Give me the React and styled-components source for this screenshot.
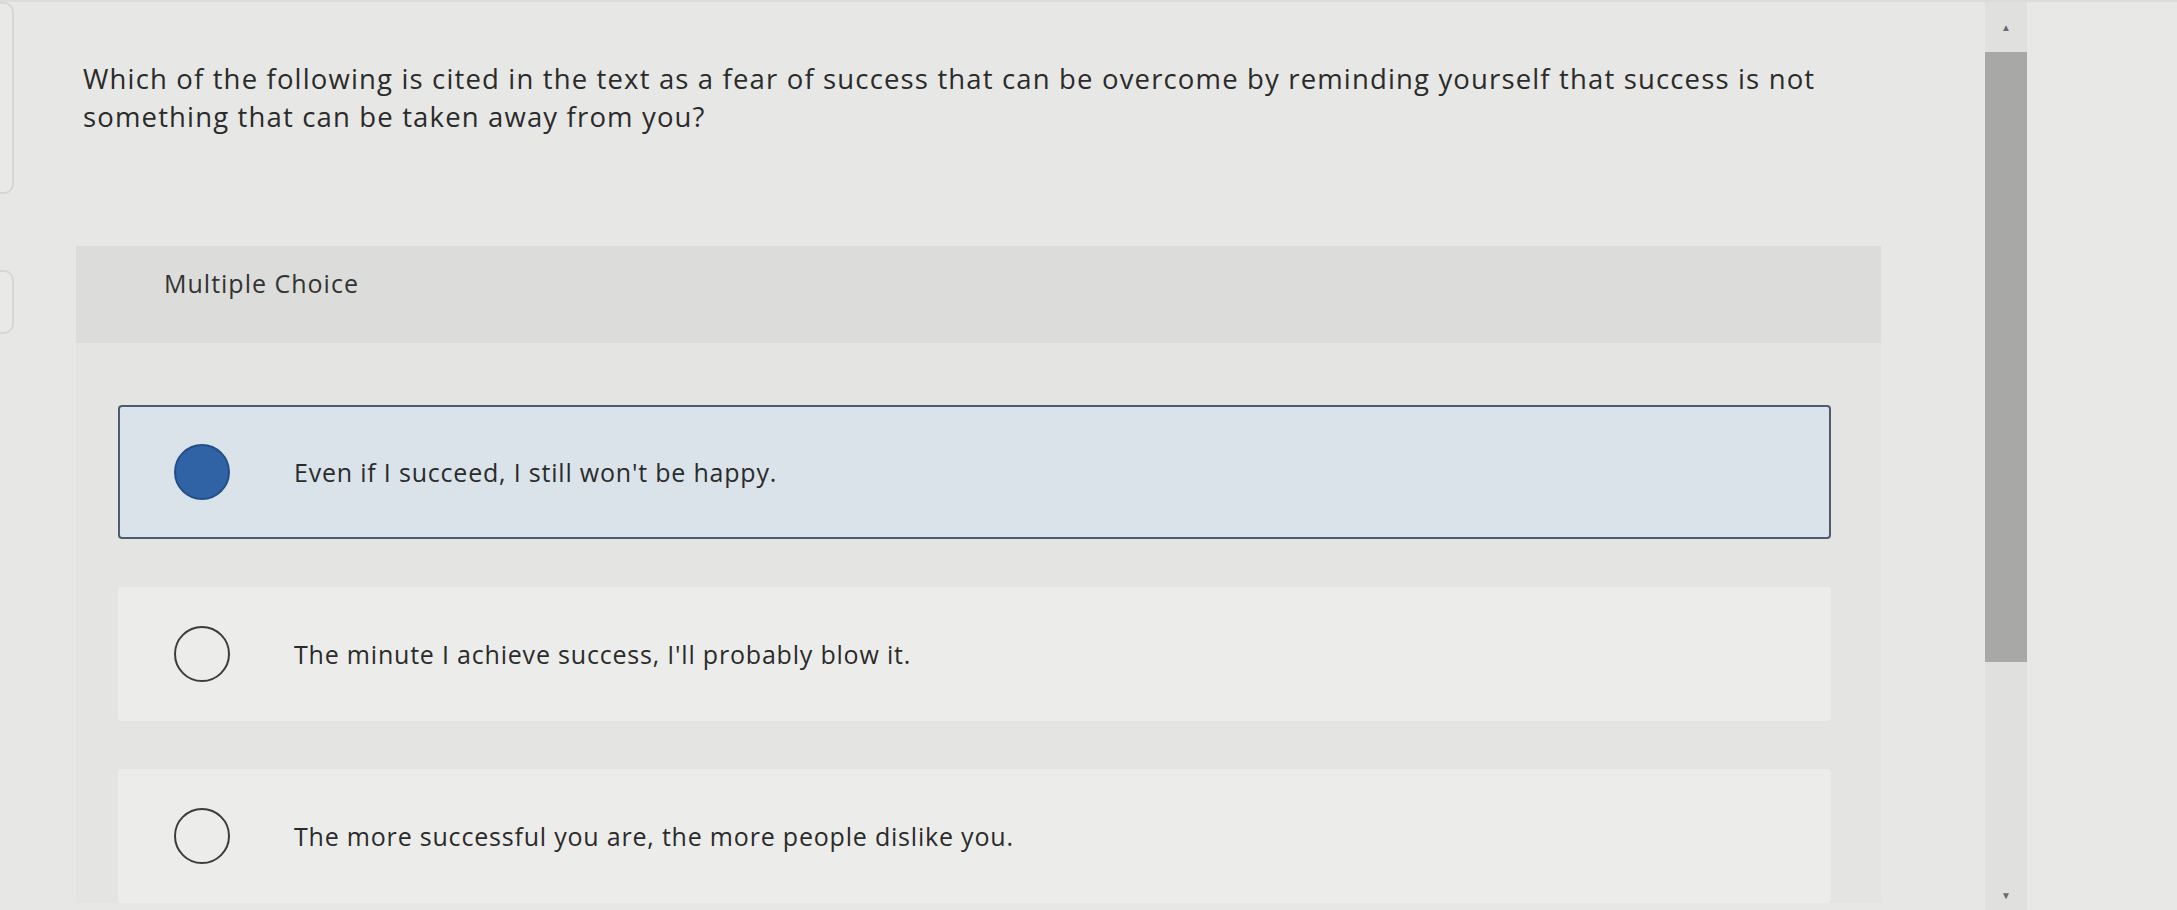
import React from "react";
import styled, { createGlobalStyle } from "styled-components";

const GlobalStyle = createGlobalStyle`
  html, body {
    margin: 0;
    padding: 0;
    background: #e7e7e5;
    font-family: "Open Sans", Lato, sans-serif;
    color: #2b2b2b;
  }
`;

const Page = styled.div`
  display: flex;
  width: 2177px;
  height: 910px;
  overflow: hidden;
  background: #e7e7e5;
  border-top: 2px solid #dcdcda;
  box-sizing: border-box;
`;

const LeftRail = styled.div`
  width: 14px;
  flex-shrink: 0;
  display: flex;
  flex-direction: column;
  gap: 76px;
`;

const RailTab = styled.div`
  height: ${(p) => p.h}px;
  border: 2px solid #d6d6d4;
  border-left: none;
  border-radius: 0 10px 10px 0;
  background: #e9e9e7;
`;

const Main = styled.div`
  flex: 1;
  padding: 58px 104px 0 62px;
  display: flex;
  flex-direction: column;
`;

const Question = styled.p`
  margin: 0 0 0 7px;
  font-size: 27.5px;
  letter-spacing: 1.15px;
  line-height: 38px;
  color: #2b2b2b;
`;

const Panel = styled.section`
  margin-top: 110px;
  background: #e4e4e2;
  display: flex;
  flex-direction: column;
`;

const PanelHeader = styled.div`
  height: 97px;
  background: #dcdcda;
  padding: 20px 88px 0;
  box-sizing: border-box;
  font-size: 25px;
  letter-spacing: 1px;
  line-height: 34px;
  color: #333;
`;

const Options = styled.div`
  display: flex;
  flex-direction: column;
  gap: 48px;
  padding: 62px 50px 0 42px;
`;

const Option = styled.label`
  display: flex;
  align-items: center;
  height: 134px;
  box-sizing: border-box;
  padding-left: 54px;
  border-radius: 4px;
  border: 2px solid ${(p) => (p.selected ? "#4d5c70" : "transparent")};
  background: ${(p) => (p.selected ? "#d9e3e9" : "#ececea")};
`;

const Radio = styled.span`
  width: 56px;
  height: 56px;
  flex-shrink: 0;
  border-radius: 50%;
  box-sizing: border-box;
  border: 2px solid ${(p) => (p.checked ? "#244f86" : "#3c3c3c")};
  background: ${(p) => (p.checked ? "#2f63a6" : "transparent")};
`;

const OptionText = styled.span`
  margin-left: 64px;
  font-size: 25px;
  letter-spacing: 0.8px;
  color: #2b2b2b;
`;

const ScrollTrack = styled.div`
  width: 42px;
  flex-shrink: 0;
  background: #e0e0de;
  display: flex;
  flex-direction: column;
  align-items: center;
`;

const Arrow = styled.div`
  height: ${(p) => p.h}px;
  display: flex;
  align-items: center;
  justify-content: center;
  color: #6a6a6a;
  font-size: 10px;
`;

const Thumb = styled.div`
  width: 100%;
  height: 610px;
  background: #a8a8a6;
`;

const Spacer = styled.div`
  flex: 1;
`;

const RightPane = styled.div`
  width: 150px;
  flex-shrink: 0;
  background: #e8e8e6;
`;

const choices = [
  "Even if I succeed, I still won't be happy.",
  "The minute I achieve success, I'll probably blow it.",
  "The more successful you are, the more people dislike you.",
];

export default function App() {
  return (
    <>
      <GlobalStyle />
      <Page>
        <LeftRail>
          <RailTab h={188} />
          <RailTab h={60} />
        </LeftRail>
        <Main>
          <Question>
            Which of the following is cited in the text as a fear of success that can be overcome by reminding yourself that success is not
            something that can be taken away from you?
          </Question>
          <Panel>
            <PanelHeader>Multiple Choice</PanelHeader>
            <Options>
              {choices.map((c, i) => (
                <Option key={c} selected={i === 0}>
                  <Radio checked={i === 0} />
                  <OptionText>{c}</OptionText>
                </Option>
              ))}
            </Options>
          </Panel>
        </Main>
        <ScrollTrack>
          <Arrow h={50}>▲</Arrow>
          <Thumb />
          <Spacer />
          <Arrow h={30}>▼</Arrow>
        </ScrollTrack>
        <RightPane />
      </Page>
    </>
  );
}
